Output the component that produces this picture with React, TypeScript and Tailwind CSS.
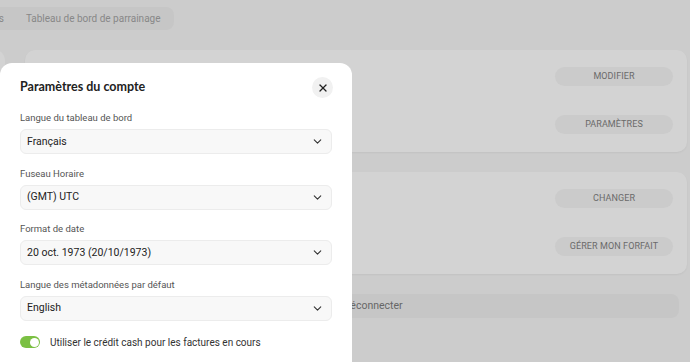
import { ChevronDown, X } from 'lucide-react';

type Field = { label: string; value: string };

const fields: Field[] = [
  { label: 'Langue du tableau de bord', value: 'Français' },
  { label: 'Fuseau Horaire', value: '(GMT) UTC' },
  { label: 'Format de date', value: '20 oct. 1973 (20/10/1973)' },
  { label: 'Langue des métadonnées par défaut', value: 'English' },
];

function PillButton({ children }: { children: React.ReactNode }) {
  return (
    <button className="flex h-[19px] w-[118px] items-center justify-center rounded-full bg-[#cbcbcb] text-[9px] font-normal tracking-[0.01em] text-[#6a6a6a]">
      {children}
    </button>
  );
}

function SettingsCard({ top, bottom }: { top: string; bottom: string }) {
  return (
    <section className="flex h-[102px] flex-col items-end justify-between rounded-[10px] bg-[#d3d3d3] px-[14px] pb-[18px] pt-[17px] shadow-[0_1px_2px_rgba(0,0,0,0.05)]">
      <PillButton>{top}</PillButton>
      <PillButton>{bottom}</PillButton>
    </section>
  );
}

function SelectField({ label, value }: Field) {
  return (
    <div className="flex flex-col">
      <label className="text-[9.5px] leading-[14px] text-[#555]">{label}</label>
      <div className="mt-[4px] flex h-[25px] items-center justify-between rounded-[6px] border border-[#ececec] bg-[#f8f8f8] pl-[6px] pr-[7px]">
        <span className="text-[10.5px] text-[#222]">{value}</span>
        <ChevronDown size={13} strokeWidth={2} className="text-[#333]" />
      </div>
    </div>
  );
}

export default function App() {
  return (
    <div className="relative h-[362px] w-[690px] overflow-hidden bg-[#cccccc] font-['Roboto',sans-serif]">
      {/* page behind the overlay */}
      <div className="pt-[7px]">
        <div className="ml-[-55px] flex h-[23px] w-fit items-center gap-[22px] rounded-[8px] bg-[#c6c6c6] pr-[13px] text-[10px] text-[#888]">
          <span className="pl-[6px]">Statistiques</span>
          <span>Tableau de bord de parrainage</span>
        </div>

        <div className="mt-[20px] flex gap-[20px] pr-[3px]">
          <div className="ml-[-195px] h-[102px] w-[200px] rounded-[10px] bg-[#d3d3d3]" />
          <div className="flex flex-1 flex-col gap-[20px]">
            <SettingsCard top="MODIFIER" bottom="PARAMÈTRES" />
            <SettingsCard top="CHANGER" bottom="GÉRER MON FORFAIT" />
            <div className="mr-[8px] flex h-[24px] items-center rounded-[8px] bg-[#c6c6c6] pl-[305px] text-[10.5px] text-[#666]">
              Se déconnecter
            </div>
          </div>
        </div>
      </div>

      {/* modal */}
      <div className="absolute left-0 top-[63px] h-[320px] w-[352px] rounded-t-[12px] bg-white px-[20px] pt-[14px]">
        <div className="flex items-center justify-between">
          <h2 className="font-['Lato',sans-serif] text-[12.5px] font-bold text-[#222]">
            Paramètres du compte
          </h2>
          <button className="mr-[-1px] flex h-[21px] w-[21px] items-center justify-center rounded-full bg-[#f1f1f1] text-[#222]">
            <X size={12} strokeWidth={2.5} />
          </button>
        </div>

        <div className="mt-[13px] flex flex-col gap-[12.5px]">
          {fields.map((f) => (
            <SelectField key={f.label} label={f.label} value={f.value} />
          ))}
        </div>

        <div className="mt-[14px] flex items-center gap-[10px]">
          <span className="flex h-[12px] w-[20px] items-center justify-end rounded-full bg-[#7bc043] px-[1.5px]">
            <span className="h-[9px] w-[9px] rounded-full bg-white" />
          </span>
          <span className="text-[10px] text-[#333]">
            Utiliser le crédit cash pour les factures en cours
          </span>
        </div>
      </div>
    </div>
  );
}
